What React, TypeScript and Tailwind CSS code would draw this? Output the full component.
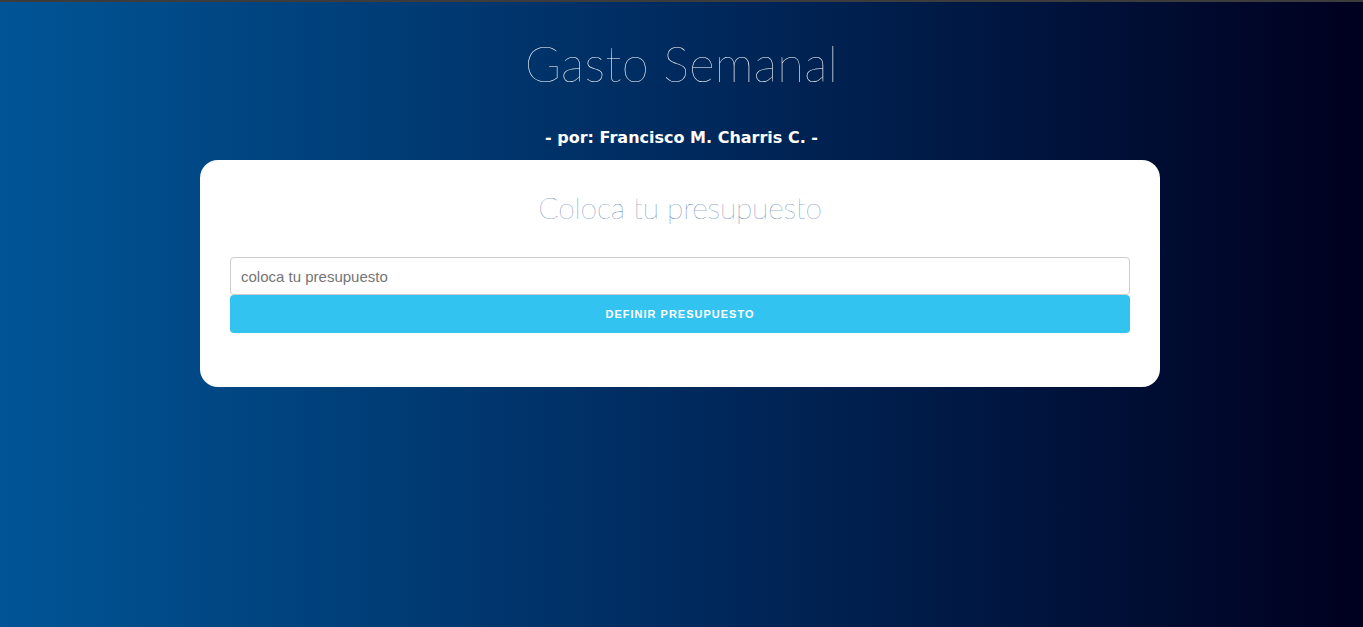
import React from "react";

export default function App() {
  return (
    <div className="min-h-[627px] w-full border-t-2 border-[#3c3c3c] bg-[linear-gradient(to_right,#005596,#002a5e_50%,#00001f)] flex flex-col items-center font-['Lato',sans-serif]">
      <h1 className="mt-[28px] h-[66px] leading-[66px] text-[49px] font-thin text-white tracking-[0.3px]">
        Gasto Semanal
      </h1>
      <p className="mt-[30px] h-[24px] leading-[24px] text-[16px] font-bold text-white font-['Comic_Sans_MS','DejaVu_Sans',sans-serif]">
        - por: Francisco M. Charris C. -
      </p>
      <div className="mt-[10px] mr-[3px] w-[960px] rounded-[18px] bg-white px-[30px] pt-[27px] pb-[54px] flex flex-col">
        <h2 className="h-[40px] leading-[40px] text-center text-[30px] font-thin text-[#2c5598] tracking-[-0.2px]">
          Coloca tu presupuesto
        </h2>
        <input
          type="text"
          placeholder="coloca tu presupuesto"
          className="mt-[30px] h-[38px] w-full rounded-[4px] border border-[#cccccc] px-[10px] text-[15px] text-[#333] placeholder:text-[#757575] font-['Liberation_Sans',Arial,sans-serif] outline-none"
        />
        <button className="h-[38px] w-full rounded-[4px] bg-[#33c3f0] text-white text-[11px] font-bold tracking-[1px] uppercase font-['Liberation_Sans',Arial,sans-serif]">
          Definir presupuesto
        </button>
      </div>
    </div>
  );
}
